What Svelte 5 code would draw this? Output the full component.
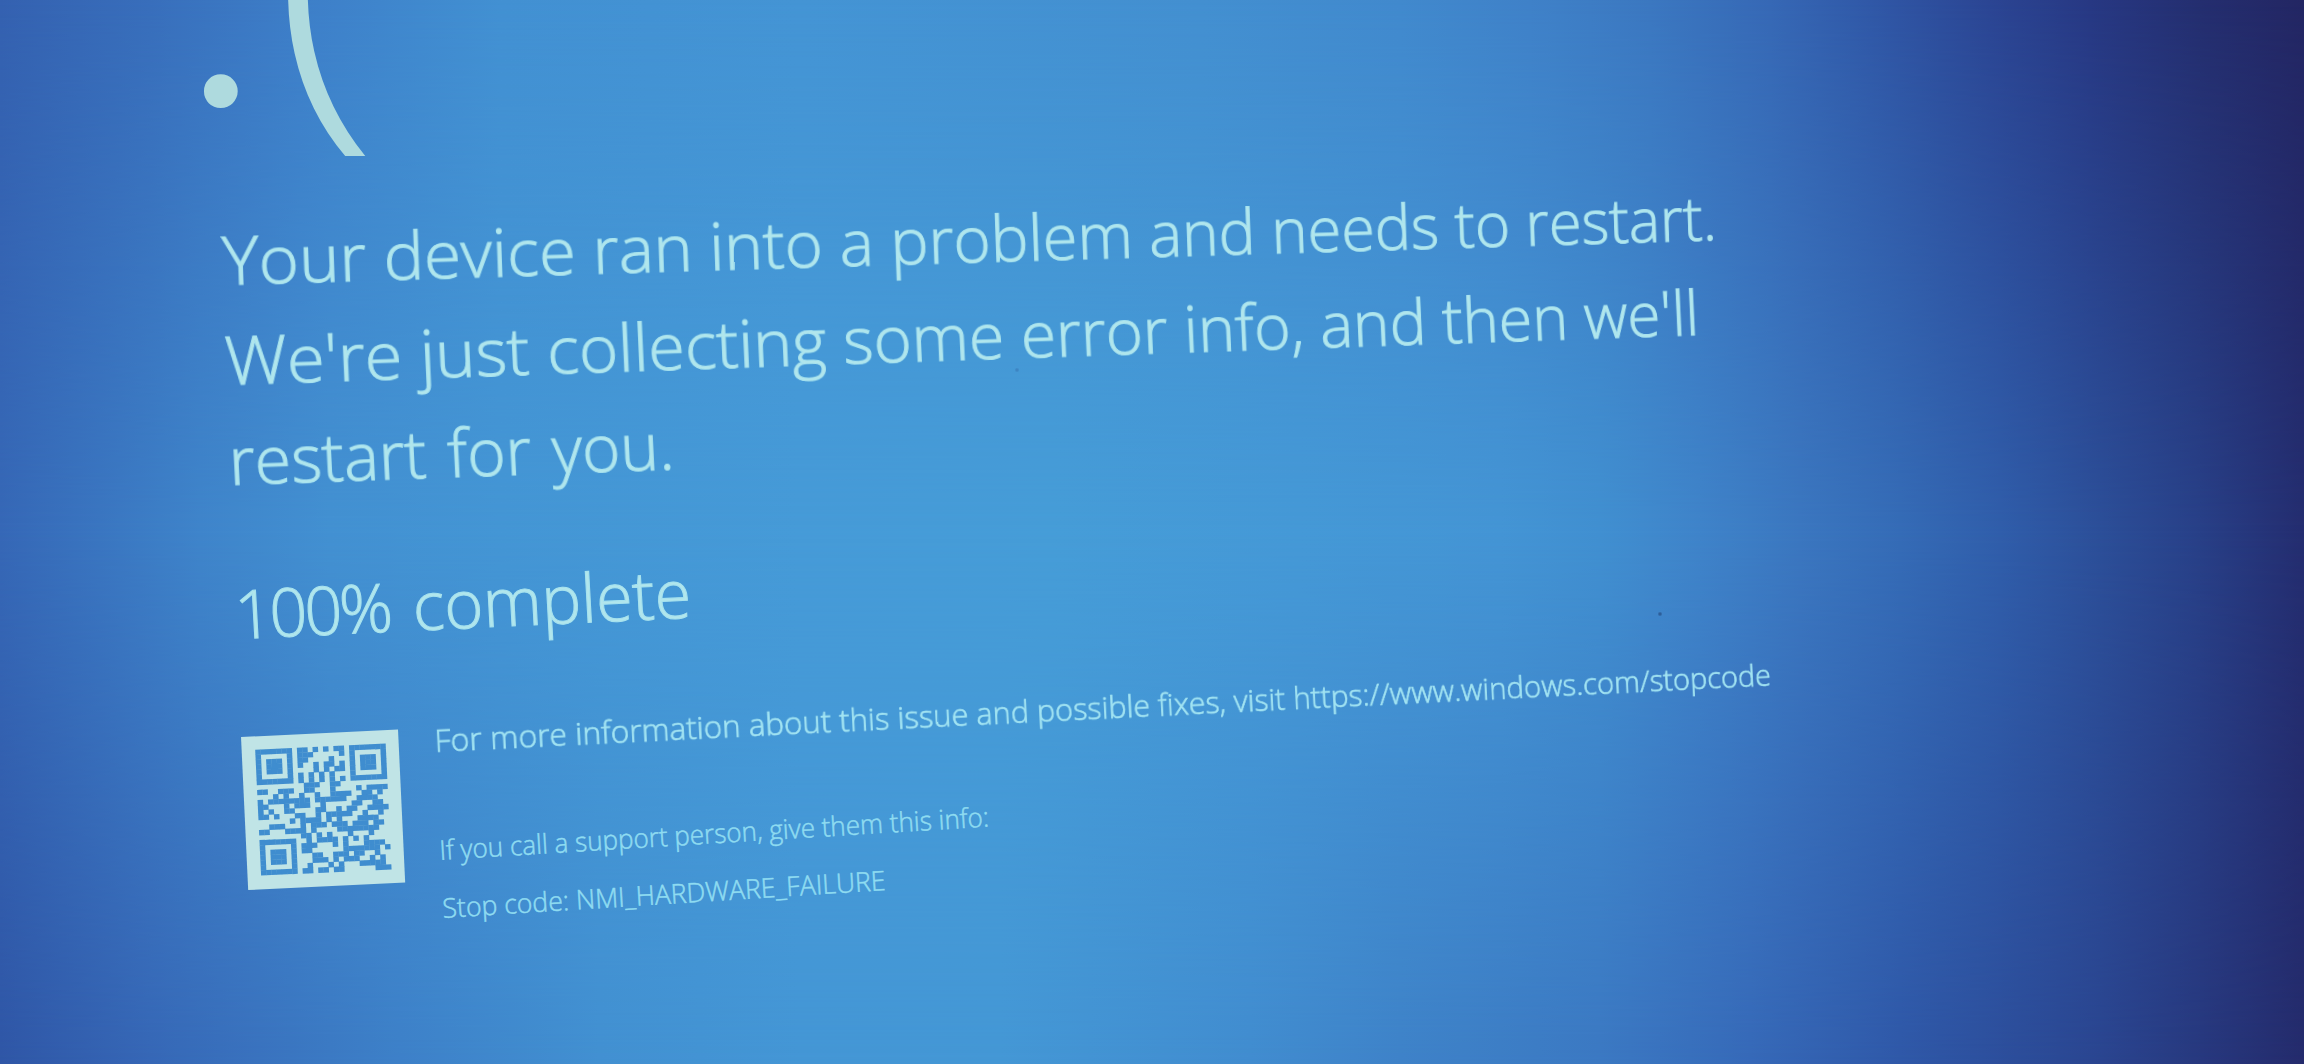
<script lang="ts">
  const message = [
    'Your device ran into a problem and needs to restart.',
    "We're just collecting some error info, and then we'll",
    'restart for you.'
  ];
  const progress = 100;
  const stopCode = 'NMI_HARDWARE_FAILURE';

  // QR modules for https://www.windows.com/stopcode
  const qr = [
    '#######.##.#.#.##.#######',
    '#.....#.###.....#.#.....#',
    '#.###.#.##....#...#.###.#',
    '#.###.#.#..#.##.#.#.###.#',
    '#.###.#....#.#.##.#.###.#',
    '#.....#.#.#.#.#...#.....#',
    '#######.#.#.#.#.#.#######',
    '.........###..##.........',
    '##..###..##...#....#.####',
    '...#.#..#..#..####..##.#.',
    '#.########.######..####..',
    '##...#.###..#.....##..##.',
    '#.#..##....##..#.##..####',
    '##.#...##..#.#####..#..#.',
    '......#.####.#.#...####..',
    '..###...#.###.###.###.##.',
    '##...####.#....########..',
    '........##.#.#...#...#...',
    '#######..#.####.#.#.#....',
    '#.....#.###...#.#...####.',
    '#.###.#.##......#######.#',
    '#.###.#...##..###.##..#..',
    '#.###.#...###.#.###..#.#.',
    '#.....#..#...#.#...#####.',
    '#######.##.##.##......###'
  ];
</script>

<div class="screen">
  <div class="shade shade-top"></div>
  <div class="shade shade-bottom"></div>

  <main>
    <div class="face">
      <span class="eyes">.</span>
      <span class="mouth">(</span>
    </div>

    <div class="message">
      {#each message as text, i}
        <p class="line big row-{i + 1}">{text}</p>
      {/each}
    </div>

    <p class="line big progress"><span class="percent">{progress}%</span> complete</p>

    <div class="support">
      <svg class="qr" viewBox="-2.6 -2.65 30.15 30.45" preserveAspectRatio="none">
        {#each qr as row, y}
          {#each row as cell, x}
            {#if cell === '#'}
              <rect {x} {y} width="1.06" height="1.06" />
            {/if}
          {/each}
        {/each}
      </svg>

      <div class="info">
        <p class="line more">For more information about this issue and possible fixes, visit https://www.windows.com/stopcode</p>
        <p class="line small call">If you call a support person, give them this info:</p>
        <p class="line small stop">Stop code: {stopCode}</p>
      </div>
    </div>
  </main>
</div>

<style>
  :global(body) {
    margin: 0;
  }

  .screen {
    position: relative;
    width: 2304px;
    height: 1064px;
    overflow: hidden;
    font-family: 'Open Sans', sans-serif;
    font-weight: 300;
    color: #b2e6ec;
    background:
      radial-gradient(circle at 1660px 614px, #2b5c94 1px, transparent 2.5px),
      radial-gradient(circle at 1017px 370px, #3a80bd 1px, transparent 2.5px),
      linear-gradient(90deg, #3668b7 0, #3a76c1 100px, #3f85cb 200px, #4391d2 330px, #4496d5 500px, #469bd8 800px, #469dd8 1050px, #4599d7 1300px, #4495d5 1500px, #4190d1 1600px, #3f84ca 1700px, #3b77c0 1800px, #356cb7 1900px, #305eab 2000px, #2c4f99 2100px, #284088 2200px, #242d70 2304px);
  }

  /* the panel fades unevenly towards its upper and lower edges */
  .shade {
    position: absolute;
    left: 0;
    width: 100%;
    height: 50%;
  }

  .shade-top {
    top: 0;
    background: linear-gradient(90deg, #3461b0 0, #386ebb 150px, #3d7ec8 300px, #4290d2 500px, #4494d4 800px, #438fd0 1200px, #4189cd 1400px, #3f81c8 1530px, #3b77c0 1650px, #3668b5 1770px, #3058a7 1870px, #2b4593 1990px, #273883 2090px, #242e6f 2200px, #232663 2304px);
    mask-image: linear-gradient(#000, transparent);
  }

  .shade-bottom {
    bottom: 0;
    background: linear-gradient(90deg, #2f56a6 0, #3667b6 150px, #3d80c8 400px, #4290d1 600px, #4496d5 800px, #4497d5 1000px, #418ccf 1250px, #3e82c8 1400px, #3b78c2 1600px, #3669b8 1750px, #2f58a8 1900px, #2a4590 2100px, #242b6c 2304px);
    mask-image: linear-gradient(transparent, #000);
  }

  main {
    position: relative;
    display: flex;
    flex-direction: column;
    align-items: flex-start;
  }

  .face {
    display: flex;
    align-items: flex-start;
    height: 209px;
    padding-left: 189px;
    line-height: 0;
    color: #aedade;
  }

  .eyes {
    width: 83px;
    margin-top: 2px;
    font-family: Lato, sans-serif;
    font-size: 270px;
    font-weight: 400;
  }

  .mouth {
    margin-top: -51px;
    font-size: 380px;
    transform: scaleX(1.03);
    transform-origin: 0 0;
  }

  .message {
    height: 354px;
  }

  /* every line leans with the camera angle, pivoting on its own baseline */
  .line {
    width: max-content;
    margin: 0;
    white-space: nowrap;
  }

  .big {
    font-size: 67px;
    line-height: 100px;
    transform-origin: 0 76px;
    -webkit-text-stroke: 1.1px #a6e2ee;
  }

  .row-1 {
    margin-left: 223px;
    transform: matrix3d(1.032, -0.031, 0, 0.0000557, 0.035, 1, 0, 0, 0, 0, 1, 0, 0, 0, 0, 1);
  }

  .row-2 {
    margin-left: 226px;
    transform: matrix3d(1.037, -0.0352, 0, 0.0000512, 0.045, 1, 0, 0, 0, 0, 1, 0, 0, 0, 0, 1);
  }

  .row-3 {
    margin-left: 230px;
    word-spacing: 4px;
    transform: matrix3d(0.989, -0.0347, 0, 0.00002, 0.05, 1, 0, 0, 0, 0, 1, 0, 0, 0, 0, 1);
  }

  .progress {
    margin-left: 236px;
    transform: matrix(0.988, -0.0465, 0.055, 1, 0, 0);
  }

  .percent {
    margin-right: 6px;
    letter-spacing: -3px;
  }

  .support {
    display: flex;
    margin: 74px 0 0 241px;
  }

  .qr {
    width: 157px;
    height: 153px;
    background: #c0e4e6;
    fill: #3f8dcf;
    transform: matrix(1, -0.047, 0.047, 1, 0, 0);
    transform-origin: 0 0;
  }

  .info {
    margin: -22px 0 0 37px;
  }

  .more {
    font-size: 32px;
    line-height: 50px;
    color: #a2e4f2;
    transform: matrix3d(1.004, -0.0499, 0, 0.00004, 0.05, 1, 0, 0, 0, 0, 1, 0, 0, 0, 0, 1);
    transform-origin: 0 37px;
    -webkit-text-stroke: 0.6px #a2e4f2;
  }

  .small {
    font-size: 27px;
    line-height: 50px;
    color: #8fdcf1;
    transform-origin: 0 35px;
    -webkit-text-stroke: 0.5px #8fdcf1;
  }

  .call {
    margin: 60px 0 0 5px;
    transform: matrix(0.9632, -0.0588, 0.06, 1, 0, 0);
  }

  .stop {
    margin: 8px 0 0 8px;
    transform: matrix(0.984, -0.0619, 0.06, 1, 0, 0);
  }
</style>
